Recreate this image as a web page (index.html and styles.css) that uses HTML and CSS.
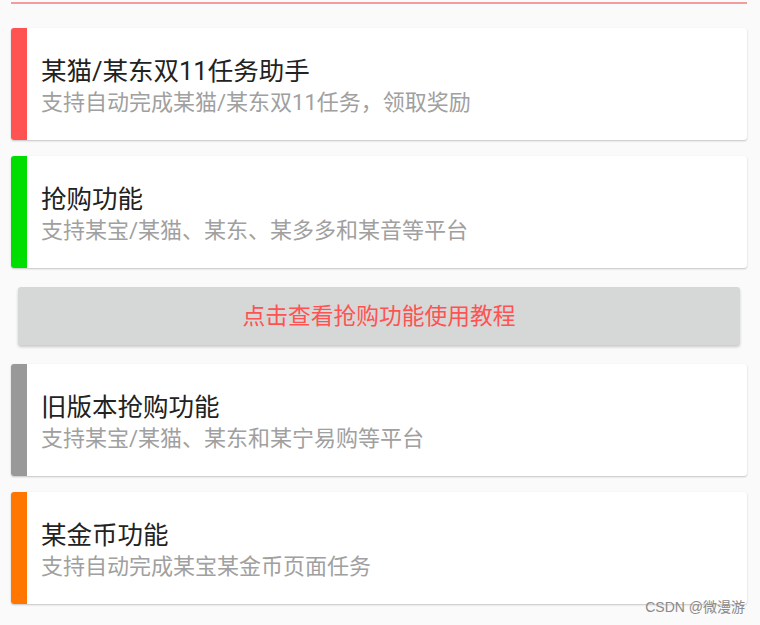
FILE: index.html
```html
<!DOCTYPE html>
<html lang="zh-CN">
<head>
<meta charset="utf-8">
<title>功能列表</title>
<link rel="stylesheet" href="styles.css">
</head>
<body>
<div class="page">
  <div class="topline"></div>
  <div class="list">
    <div class="card">
      <div class="bar bar-red"></div>
      <div class="body">
        <div class="title">某猫/某东双11任务助手</div>
        <div class="desc">支持自动完成某猫/某东双11任务，领取奖励</div>
      </div>
    </div>
    <div class="card">
      <div class="bar bar-green"></div>
      <div class="body">
        <div class="title">抢购功能</div>
        <div class="desc">支持某宝/某猫、某东、某多多和某音等平台</div>
      </div>
    </div>
    <div class="btn">点击查看抢购功能使用教程</div>
    <div class="card">
      <div class="bar bar-gray"></div>
      <div class="body">
        <div class="title">旧版本抢购功能</div>
        <div class="desc">支持某宝/某猫、某东和某宁易购等平台</div>
      </div>
    </div>
    <div class="card">
      <div class="bar bar-orange"></div>
      <div class="body">
        <div class="title">某金币功能</div>
        <div class="desc">支持自动完成某宝某金币页面任务</div>
      </div>
    </div>
  </div>
  <div class="watermark">CSDN @微漫游</div>
</div>
</body>
</html>
```

FILE: styles.css
```css
html, body {
  margin: 0;
  padding: 0;
  background: #fafafa;
}

.page {
  position: relative;
  width: 760px;
  height: 625px;
  overflow: hidden;
  font-family: Roboto, "Noto Sans CJK SC", sans-serif;
}

.topline {
  height: 2px;
  margin: 2px 13px 0 11px;
  background: #f39c9c;
}

.list {
  display: flex;
  flex-direction: column;
  margin: 24px 13px 0 11px;
}

.card {
  display: flex;
  height: 112px;
  background: #ffffff;
  border-radius: 3px;
  overflow: hidden;
  box-shadow: 0 1px 2px rgba(0, 0, 0, 0.22);
  margin-bottom: 16px;
}

.bar {
  width: 16px;
  flex: none;
}

.bar-red { background: #ff5252; }
.bar-green { background: #00dd00; }
.bar-gray { background: #999999; }
.bar-orange { background: #ff7700; }

.body {
  display: flex;
  flex-direction: column;
  justify-content: center;
  padding-left: 14px;
  padding-top: 4px;
}

.title {
  font-size: 25.5px;
  line-height: 34px;
  color: #222222;
}

.desc {
  font-size: 22px;
  line-height: 30px;
  color: #a0a0a0;
}

.btn {
  height: 55px;
  padding-bottom: 3px;
  margin: 3px 7px 19px 7px;
  background: #d6d7d7;
  border-radius: 3px;
  box-shadow: 0 2px 3px rgba(0, 0, 0, 0.2);
  display: flex;
  align-items: center;
  justify-content: center;
  font-size: 22.75px;
  color: #ff5252;
}

.watermark {
  position: absolute;
  right: 15px;
  top: 598px;
  font-family: "Liberation Sans", "Noto Sans CJK SC", sans-serif;
  font-size: 14px;
  line-height: 18px;
  color: #8a8a8a;
}
```
